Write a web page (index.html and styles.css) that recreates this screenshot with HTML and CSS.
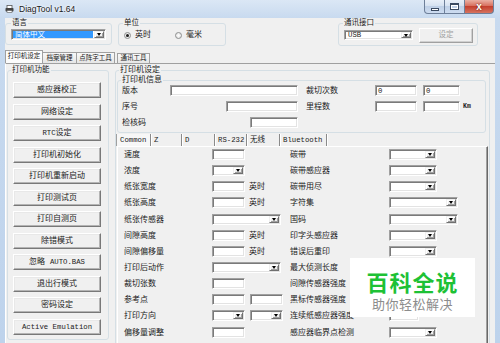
FILE: index.html
```html
<!DOCTYPE html>
<html lang="zh-CN">
<head>
  <meta charset="UTF-8" />
  <title>DiagTool v1.64</title>
  <link rel="stylesheet" href="styles.css">
</head>
<body>
<div class="window">
  <div class="titlebar">
    <svg class="app-icon" width="9" height="8" viewBox="0 0 9 8">
      <rect x="2" y="0.5" width="5" height="3" fill="#fff" stroke="#555" stroke-width="0.8"/>
      <rect x="0.5" y="3" width="8" height="3.5" rx="0.8" fill="#444"/>
      <rect x="2" y="5.5" width="5" height="2" fill="#fff" stroke="#555" stroke-width="0.6"/>
    </svg>
    <span class="title">DiagTool v1.64</span>
    <div class="caption">
      <span class="cap cap-min"><i></i></span>
      <span class="cap cap-max"><i></i></span>
      <span class="cap cap-close">x</span>
    </div>
  </div>

  <div class="client">
    <div class="top-row">
      <fieldset class="grp grp-lang">
        <legend>语言</legend>
        <div class="cb cb-sel"><span class="cb-text">简体中文</span><span class="dd"></span></div>
      </fieldset>
      <fieldset class="grp grp-unit">
        <legend>单位</legend>
        <div class="radios">
          <span class="radio on"></span><span class="radio-lbl">英时</span>
          <span class="radio"></span><span class="radio-lbl">毫米</span>
        </div>
      </fieldset>
      <fieldset class="grp grp-comm">
        <legend>通讯接口</legend>
        <div class="comm-row">
          <div class="cb cb-port"><span class="cb-text en">USB</span><span class="dd"></span></div>
          <div class="btn btn-set">设定</div>
        </div>
      </fieldset>
    </div>

    <div class="tabs">
      <span class="tab on">打印机设定</span>
      <span class="tab">档案管理</span>
      <span class="tab">点阵字工具</span>
      <span class="tab tab-comm">通讯工具</span>
    </div>

    <div class="page">
      <fieldset class="grp grp-funcs">
        <legend>打印机功能</legend>
        <div class="btn">感应器校正</div>
        <div class="btn">网络设定</div>
        <div class="btn"><span class="en">RTC</span>设定</div>
        <div class="btn">打印机初始化</div>
        <div class="btn">打印机重新启动</div>
        <div class="btn">打印测试页</div>
        <div class="btn">打印自测页</div>
        <div class="btn">除错模式</div>
        <div class="btn">忽略 <span class="en">AUTO.BAS</span></div>
        <div class="btn">退出行模式</div>
        <div class="btn">密码设定</div>
        <div class="btn en">Active Emulation</div>
      </fieldset>

      <fieldset class="grp grp-settings">
        <legend>打印机设定</legend>
        <fieldset class="grp grp-info">
          <legend>打印机信息</legend>
          <div class="info-rows">
            <div class="info-row">
              <div class="info-l"><span>版本</span><span class="tb w128"></span></div>
              <div class="info-r">
                <span class="info-lbl">裁切次数</span>
                <span class="tb w42 en">0</span>
                <span class="tb w37 en">0</span>
              </div>
            </div>
            <div class="info-row">
              <div class="info-l"><span>序号</span><span class="tb w72"></span></div>
              <div class="info-r">
                <span class="info-lbl">里程数</span>
                <span class="tb w42"></span>
                <span class="tb w37"></span>
                <span class="km">Km</span>
              </div>
            </div>
            <div class="info-row">
              <div class="info-l"><span>检核码</span><span class="tb w48"></span></div>
            </div>
          </div>
        </fieldset>

        <div class="subtabs">
          <span class="stab en s1">Common</span>
          <span class="stab en s2">Z</span>
          <span class="stab en s3">D</span>
          <span class="stab en s4">RS-232</span>
          <span class="stab s5">无线</span>
          <span class="stab en s6">Bluetooth</span>
        </div>

        <div class="subpage">
          <span class="lbl">速度</span>
          <div class="ctl"><span class="tb w33"></span></div>
          <span class="lbl">碳带</span>
          <div class="ctl"><span class="cb w48"><span class="cb-text"></span><span class="dd"></span></span></div>

          <span class="lbl">浓度</span>
          <div class="ctl"><span class="cb w33"><span class="cb-text"></span><span class="dd"></span></span></div>
          <span class="lbl">碳带感应器</span>
          <div class="ctl"><span class="cb w48"><span class="cb-text"></span><span class="dd"></span></span></div>

          <span class="lbl">纸张宽度</span>
          <div class="ctl"><span class="tb w33"></span><span class="lbl unit">英时</span></div>
          <span class="lbl">碳带用尽</span>
          <div class="ctl"><span class="cb w48"><span class="cb-text"></span><span class="dd"></span></span></div>

          <span class="lbl">纸张高度</span>
          <div class="ctl"><span class="tb w33"></span><span class="lbl unit">英时</span></div>
          <span class="lbl">字符集</span>
          <div class="ctl"><span class="cb w69"><span class="cb-text"></span><span class="dd"></span></span></div>

          <span class="lbl">纸张传感器</span>
          <div class="ctl"><span class="cb w69"><span class="cb-text"></span><span class="dd"></span></span></div>
          <span class="lbl">国码</span>
          <div class="ctl"><span class="cb w69"><span class="cb-text"></span><span class="dd"></span></span></div>

          <span class="lbl">间隙高度</span>
          <div class="ctl"><span class="tb w33"></span><span class="lbl unit">英时</span></div>
          <span class="lbl">印字头感应器</span>
          <div class="ctl"><span class="cb w48"><span class="cb-text"></span><span class="dd"></span></span></div>

          <span class="lbl">间隙偏移量</span>
          <div class="ctl"><span class="tb w33"></span><span class="lbl unit">英时</span></div>
          <span class="lbl">错误后重印</span>
          <div class="ctl"><span class="cb w48"><span class="cb-text"></span><span class="dd"></span></span></div>

          <span class="lbl">打印后动作</span>
          <div class="ctl"><span class="cb w69"><span class="cb-text"></span><span class="dd"></span></span></div>
          <span class="lbl">最大侦测长度</span>
          <div class="ctl"><span class="tb w30"></span></div>

          <span class="lbl">裁切张数</span>
          <div class="ctl"><span class="tb w33"></span></div>
          <span class="lbl">间隙传感器强度</span>
          <div class="ctl"><span class="tb w30"></span></div>

          <span class="lbl">参考点</span>
          <div class="ctl"><span class="tb w33"></span><span class="tb w33"></span></div>
          <span class="lbl">黑标传感器强度</span>
          <div class="ctl"><span class="tb w30"></span></div>

          <span class="lbl">打印方向</span>
          <div class="ctl">
            <span class="cb w33"><span class="cb-text"></span><span class="dd"></span></span>
            <span class="cb w33"><span class="cb-text"></span><span class="dd"></span></span>
          </div>
          <span class="lbl">连续纸感应器强度</span>
          <div class="ctl"><span class="tb w30"></span></div>

          <span class="lbl">偏移量调整</span>
          <div class="ctl"><span class="tb w33"></span></div>
          <span class="lbl">感应器临界点检测</span>
          <div class="ctl"><span class="cb w48"><span class="cb-text"></span><span class="dd"></span></span></div>
        </div>
      </fieldset>
    </div>
  </div>

  <div class="watermark">
    <span class="wm-main">百科全说</span>
    <span class="wm-sub">助你轻松解决</span>
  </div>
</div>
</body>
</html>
```

FILE: styles.css
```css
*{box-sizing:border-box;margin:0;padding:0}
body{width:500px;height:343px;overflow:hidden;background:#c4d7ee;font-family:"Liberation Mono","Noto Sans CJK SC",monospace;font-size:8px;line-height:10px;color:#1a1a1a}
.en{font-size:7.3px}

/* window frame */
.window{position:relative;height:343px;display:flex;flex-direction:column;background:linear-gradient(180deg,#dbe7f5 0,#c8daef 18px,#bed3ec 100%)}
.titlebar{height:18px;flex:none;display:flex;align-items:flex-start}
.app-icon{margin:5px 0 0 5px;flex:none}
.title{margin:3px 0 0 5px;font-family:"Liberation Sans",sans-serif;font-size:8.5px;line-height:12px;text-shadow:0 0 4px #fff,0 0 2px #fff}
.caption{margin-left:auto;margin-right:6px;display:flex}
.cap{height:14px;border:1px solid #6d7f99;border-top:0;display:flex;align-items:center;justify-content:center;background:linear-gradient(180deg,#e8eff8 0,#d6e2f1 45%,#bfd0e7 50%,#cddcf0 100%)}
.cap-min{width:21px;border-radius:0 0 0 4px}
.cap-min i{width:8px;height:3px;margin-top:5px;background:#fff;border:1px solid #3a4a61}
.cap-max{width:20px;border-left:0}
.cap-max i{width:9px;height:7px;border:1px solid #3a4a61;border-top-width:2px;box-shadow:inset 0 0 0 1px #fff}
.cap-close{width:29px;border-left:0;border-radius:0 0 4px 0;background:linear-gradient(180deg,#eab0a3 0,#d8705f 45%,#c4402e 50%,#d6735f 100%);color:#fff;font:bold 10px/12px "Liberation Sans",sans-serif;text-shadow:0 0 2px #5a0f05}

.client{flex:1;min-height:0;margin:0 5px;background:#f0f0f0;overflow:hidden;display:flex;flex-direction:column}

/* group boxes */
.grp{border:1px solid #d5dfe5;border-radius:3px;min-width:0}
.grp legend{padding:0 1px;font-size:7.5px;line-height:10px}

.top-row{height:32px;flex:none;display:flex;align-items:flex-start}
.grp-lang{width:107px;padding:1px 5px 4px}
.grp-unit{width:108px;margin-left:6px;padding:2px 4px 5px}
.grp-comm{width:140px;margin-left:112px;padding:0 4px 2px}
.comm-row{display:flex;align-items:flex-start}

/* controls */
.tb{display:block;flex:none;height:11px;background:#fff;border:1px solid;border-color:#a0a0a0 #fff #fff #a0a0a0;box-shadow:inset 1px 1px 0 #7a7a7a,inset -1px -1px 0 #e3e3e3;padding:1px 0 0 2px;line-height:8px}
.cb{display:flex;flex:none;height:11px;background:#fff;border:1px solid;border-color:#a0a0a0 #fff #fff #a0a0a0;box-shadow:inset 1px 1px 0 #7a7a7a,inset -1px -1px 0 #e3e3e3;padding:1px}
.cb-text{flex:1;padding-left:2px;line-height:8px;white-space:nowrap;overflow:hidden}
.dd{width:10px;flex:none;background:#f0f0f0;border:1px solid;border-color:#f0f0f0 #707070 #707070 #f0f0f0;box-shadow:inset 1px 1px 0 #fff,inset -1px -1px 0 #a0a0a0;display:flex;align-items:center;justify-content:center}
.dd::after{content:"";border-left:2.5px solid transparent;border-right:2.5px solid transparent;border-top:3px solid #000}
.cb-sel{width:100%}
.cb-sel .cb-text{background:#3399ff;color:#fff;font-size:7.5px;margin-right:1px}
.cb-port{width:69px;height:10px;margin:2px 0 0 1px}
.cb-port .cb-text{line-height:7px}

.btn{display:block;height:16px;width:88px;background:#f0f0f0;border:1px solid;border-color:#fff #787878 #787878 #fff;box-shadow:inset -1px -1px 0 #b4b4b4,inset 1px 1px 0 #e8e8e8;text-align:center;line-height:14px;white-space:nowrap}
.btn-set{width:54px;height:15px;margin-left:6px;line-height:13px;color:#a0a0a0;font-size:7.5px;border-color:#fff #a0a0a0 #a0a0a0 #fff;box-shadow:inset -1px -1px 0 #d0d0d0}

.radios{display:flex;align-items:center;height:10px}
.radio{width:7px;height:7px;flex:none;margin-left:1px;border-radius:50%;border:1px solid #8e8f8f;background:radial-gradient(#fff,#dcdcdc);display:flex;align-items:center;justify-content:center}
.radio.on::after{content:"";width:3px;height:3px;border-radius:50%;background:#1d1d1d}
.radio-lbl{margin-left:4px}
.radio-lbl + .radio{margin-left:24px}

/* main tabs */
.tabs{height:13px;flex:none;display:flex;align-items:flex-end}
.tab{height:11px;line-height:11px;font-size:6.5px;text-align:center;background:linear-gradient(#f8f8f8,#e6e6e6);border:1px solid #a0a0a0;border-bottom:0;border-left:0}
.tab:nth-child(1){width:38px}
.tab:nth-child(2){width:34px}
.tab:nth-child(3){width:38px}
.tab.on{height:13px;line-height:12px;background:#fcfcfc;border-left:1px solid #a0a0a0}
.tab-comm{width:33px;height:10px;line-height:10px;margin-left:2px;border-left:1px solid #a0a0a0}

.page{flex:1;min-height:0;display:flex;align-items:flex-start;border-top:1px solid #a0a0a0;border-left:1px solid #fff;padding-top:1px}

.grp-funcs{width:102px;height:275px;margin-left:1px;padding:7px 3px 0;flex:none}
.grp-funcs .btn{margin:0 0 5.5px 2px}

.grp-settings{width:375px;height:300px;margin-left:6px;padding:0 1px;flex:none}
.grp-settings legend{margin-left:2px;font-size:8px}
.grp-info{margin-right:2px;padding:0 1px 4px}
.grp-info legend{font-size:8px}

.info-rows{display:flex;flex-direction:column;gap:5px;padding-left:3px}
.info-row{display:flex;align-items:center;height:11px}
.info-l{width:176px;display:flex;justify-content:space-between;align-items:center}
.info-r{margin-left:8px;display:flex;align-items:center}
.info-lbl{width:69px}
.info-r .tb + .tb{margin-left:6px}
.km{margin-left:3px;font-size:6.5px;font-weight:bold}

.w128{width:128px}
.w72{width:72px}
.w69{width:69px}
.w48{width:48px}
.w42{width:42px}
.w37{width:37px}
.w33{width:33px}
.w30{width:30px}

/* sub tabs */
.subtabs{height:12px;margin:1px 0 0 -1px;display:flex}
.stab{height:12px;line-height:12px;padding-left:3px;border-right:1px solid #8a8a8a;box-shadow:1px 0 0 #fff}
.s1{width:35px;border-left:1px solid #a0a0a0;background:#f7f7f7}
.s2{width:31px}
.s3{width:33px}
.s4{width:32px}
.s5{width:33px;font-size:7.5px}
.s6{width:47px}

.subpage{height:220px;border:1px solid;border-color:#fff #696969 #696969 #fff;box-shadow:inset -1px -1px 0 #a0a0a0;padding:2px 0 0 6px;display:grid;grid-template-columns:88px 78px 99px 1fr;grid-auto-rows:16.15px}
.lbl{line-height:12px;white-space:nowrap}
.ctl{display:flex;align-items:flex-start;gap:5px}
.unit{margin-left:-1px}

/* watermark */
.watermark{position:absolute;left:350px;top:258px;width:125px;height:59px;background:#fff;display:flex;flex-direction:column;align-items:center;padding-top:11px;font-family:"Noto Sans CJK SC",sans-serif}
.wm-main{font-size:22px;line-height:25px;font-weight:700;color:#1dc135;letter-spacing:1px}
.wm-sub{margin-top:2px;font-size:13px;line-height:16px;color:#8c8c8c;letter-spacing:0.5px}
```
